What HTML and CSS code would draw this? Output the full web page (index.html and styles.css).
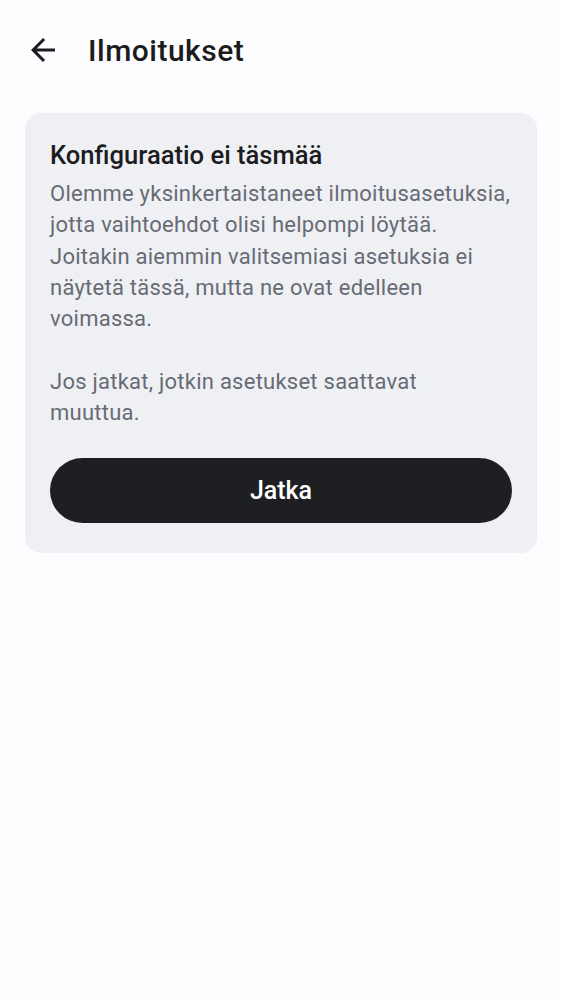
FILE: index.html
```html
<!DOCTYPE html>
<html lang="fi">
<head>
<meta charset="utf-8">
<link rel="stylesheet" href="styles.css">
</head>
<body>
<header class="topbar">
  <button class="back" aria-label="Takaisin">
    <svg width="36" height="36" viewBox="0 0 24 24"><path d="M20 11H7.83l5.59-5.59L12 4l-8 8 8 8 1.41-1.41L7.83 13H20v-2z" fill="#1b1c20"/></svg>
  </button>
  <h1 class="title">Ilmoitukset</h1>
</header>
<main class="content">
  <section class="card">
    <h2 class="card-title">Konfiguraatio ei täsmää</h2>
    <p class="card-text">Olemme yksinkertaistaneet ilmoitusasetuksia, jotta vaihtoehdot olisi helpompi löytää. Joitakin aiemmin valitsemiasi asetuksia ei näytetä tässä, mutta ne ovat edelleen voimassa.</p>
    <p class="card-text gap">Jos jatkat, jotkin asetukset saattavat<br>muuttua.</p>
    <button class="primary">Jatka</button>
  </section>
</main>
</body>
</html>
```
FILE: styles.css
```css
html, body {
  margin: 0;
  padding: 0;
  background: #fdfcff;
  font-family: Roboto, "Noto Sans", sans-serif;
}
.topbar {
  display: flex;
  align-items: center;
  height: 100px;
  padding-left: 25px;
  box-sizing: border-box;
}
.back {
  border: 0;
  background: none;
  padding: 0;
  width: 36px;
  height: 36px;
  display: flex;
}
.title {
  margin: 0 0 0 27px;
  font-size: 30px;
  font-weight: 500;
  color: #1b1c20;
  letter-spacing: 0.5px;
}
.content {
  padding: 13px 25px;
}
.card {
  background: #eff0f4;
  border-radius: 16px;
  padding: 26px 25px 30px;
  display: flex;
  flex-direction: column;
}
.card-title {
  margin: 0;
  font-size: 25.6px;
  line-height: 32px;
  font-weight: 500;
  color: #1b1c20;
}
.card-text {
  margin: 7px 0 0;
  font-size: 22px;
  line-height: 31.3px;
  color: #676b74;
  letter-spacing: 0.25px;
}
.card-text.gap {
  margin-top: 31.3px;
}
.primary {
  margin-top: 30px;
  height: 65px;
  border: 0;
  border-radius: 33px;
  background: #1e1f23;
  color: #fff;
  font-family: Roboto, "Noto Sans", sans-serif;
  font-size: 25px;
  font-weight: 500;
}
```
